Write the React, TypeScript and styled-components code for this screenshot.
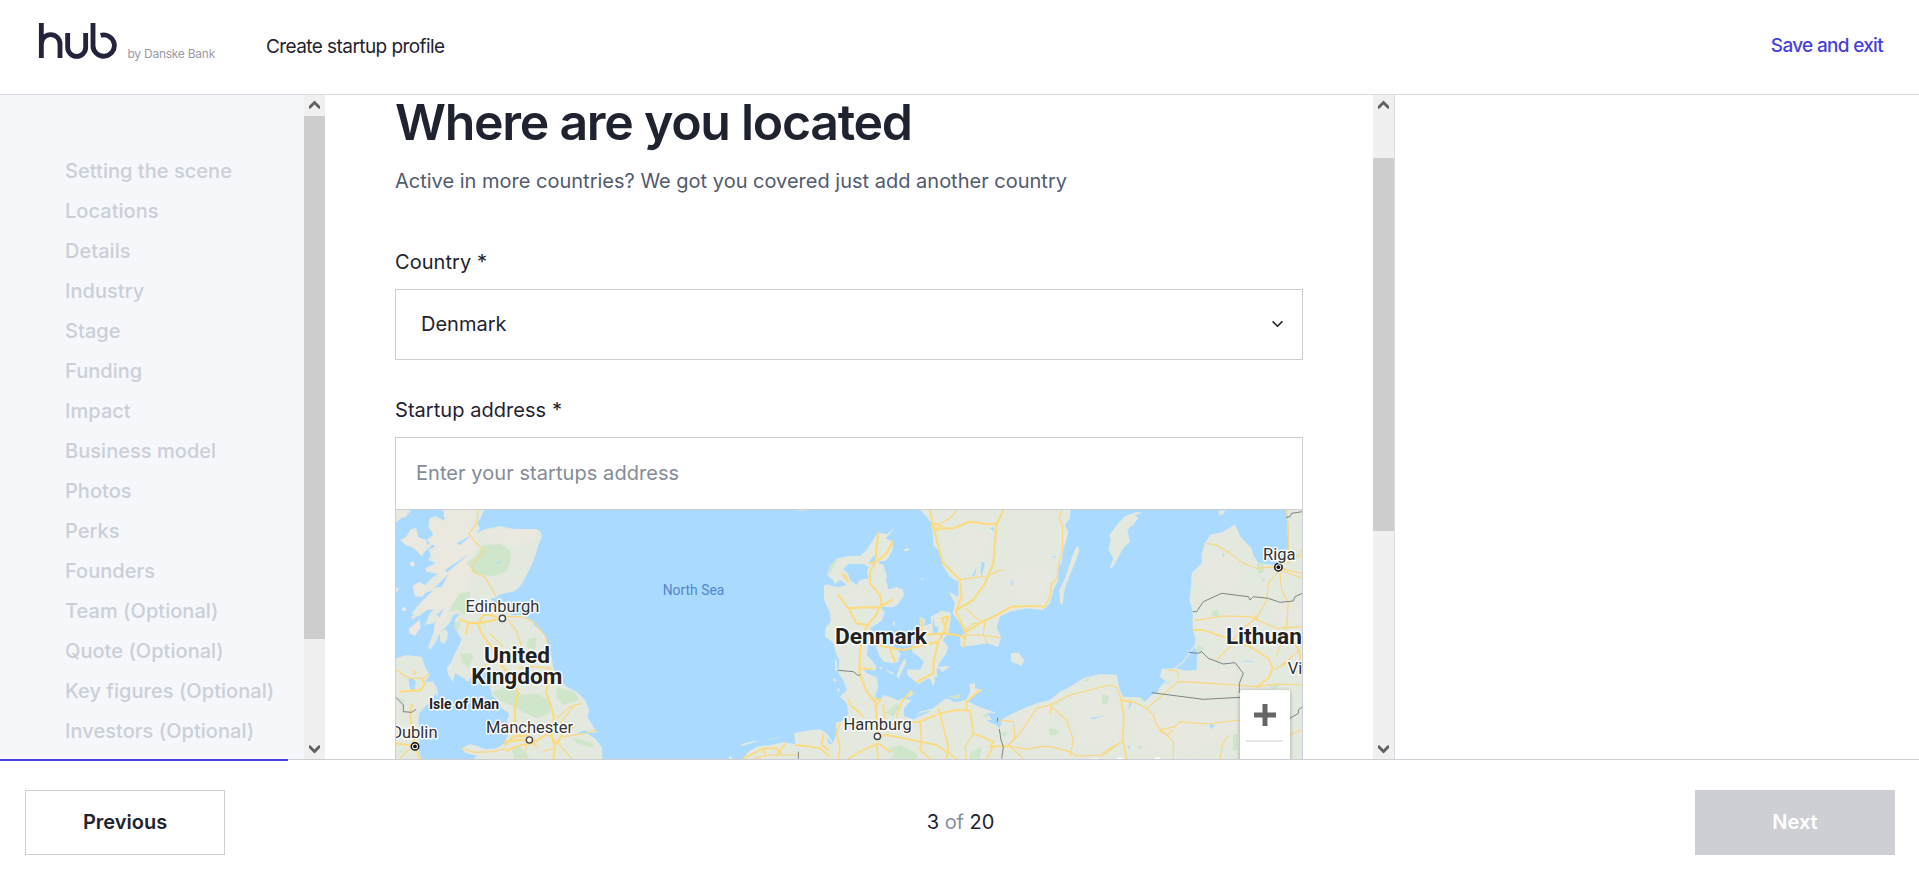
import React from "react";
import styled, { createGlobalStyle } from "styled-components";

const GlobalStyle = createGlobalStyle`
  *, *::before, *::after { box-sizing: border-box; }
  body { margin: 0; background: #fff; color: #1f2330; font-family: Inter, "Liberation Sans", sans-serif; font-size: 20px; overflow: hidden; }
  h1, p, ul { margin: 0; padding: 0; }
  button { font-family: inherit; }
`;

const Page = styled.div`
  display: flex;
  flex-direction: column;
  width: 100%;
  height: 884px;
`;

const Header = styled.header`
  display: flex;
  align-items: flex-start;
  height: 95px;
  flex: none;
  padding: 0 36px 0 38px;
  border-bottom: 1px solid #d9d9e1;
`;

const Brand = styled.div`
  display: flex;
  width: 228px;
  padding-top: 22px;
`;

const Tagline = styled.span`
  margin: 23px 0 0 9.5px;
  font-size: 12px;
  line-height: 18px;
  letter-spacing: -0.25px;
  color: #9a9aa6;
  white-space: nowrap;
`;

const PageTitle = styled.span`
  margin-top: 32px;
  flex: 1;
  font-size: 19px;
  line-height: 30px;
  letter-spacing: -0.57px;
`;

const SaveLink = styled.a`
  margin-top: 31px;
  font-size: 19px;
  line-height: 30px;
  letter-spacing: -0.69px;
  font-weight: 450;
  color: #4840dc;
`;

const Body = styled.div`
  display: flex;
  height: 664px;
  flex: none;
`;

const Sidebar = styled.aside`
  display: flex;
  width: 325px;
  background: #f6f7fb;
`;

const Steps = styled.ul`
  flex: 1;
  padding: 56px 0 0 65px;
  list-style: none;
  overflow: hidden;
`;

const Step = styled.li`
  line-height: 40px;
  font-weight: 500;
  letter-spacing: 0.04px;
  color: #cacfd7;
  white-space: nowrap;
`;

const Main = styled.main`
  display: flex;
  width: 1070px;
  border-right: 1px solid #d9d9e1;
`;

const Form = styled.div`
  flex: 1;
  padding: 1px 70px 0;
  overflow: hidden;
`;

const Heading = styled.h1`
  font-size: 50px;
  line-height: 52px;
  font-weight: 600;
  letter-spacing: -1.28px;
`;

const Intro = styled.p`
  margin-top: 18px;
  line-height: 30px;
  color: #525a70;
`;

const Label = styled.div<{ $top: number }>`
  margin: ${(p) => p.$top}px 0 12px;
  line-height: 30px;
  letter-spacing: 0.05px;
`;

const Select = styled.div`
  display: flex;
  align-items: center;
  justify-content: space-between;
  height: 71px;
  padding: 0 19px 2px 25px;
  border: 1px solid #cdced3;
`;

const AddressInput = styled.div`
  display: flex;
  align-items: center;
  height: 72px;
  padding: 0 20px 1px;
  border: 1px solid #cdced3;
  border-bottom: 0;
  letter-spacing: 0.06px;
  color: #858b98;
`;

const MapFrame = styled.div`
  position: relative;
  height: 250px;
  border: 1px solid #cdced3;
  border-bottom: 0;
  overflow: hidden;
  background: #aadaff;

  > svg { display: block; }
`;

const ZoomControl = styled.div`
  position: absolute;
  top: 180px;
  right: 12px;
  width: 50px;
  height: 100px;
  background: #fff;
  border-radius: 2px;
  box-shadow: 0 1px 4px rgba(0, 0, 0, 0.3);
`;

const ZoomButton = styled.div`
  display: flex;
  align-items: center;
  justify-content: center;
  height: 50px;
`;

const ZoomDivider = styled.div`
  height: 2px;
  margin: 0 7px 0 6px;
  background: #e6e6e6;
`;

const Track = styled.div`
  display: flex;
  flex-direction: column;
  width: 21px;
  height: 664px;
  flex: none;
  background: #f0f0f0;
`;

const ArrowBox = styled.div<{ $down?: boolean }>`
  height: 21px;
  flex: none;
  transform: ${(p) => (p.$down ? "scaleY(-1)" : "none")};
  margin-top: ${(p) => (p.$down ? "auto" : "0")};
  svg { display: block; }
`;

const Thumb = styled.div<{ $offset: number; $length: number }>`
  margin-top: ${(p) => p.$offset}px;
  height: ${(p) => p.$length}px;
  background: #cdcdcd;
`;

const Footer = styled.footer`
  position: relative;
  display: flex;
  align-items: center;
  justify-content: space-between;
  height: 125px;
  padding: 0 24px 0 25px;
  border-top: 1px solid #cdced3;
`;

const Progress = styled.div`
  position: absolute;
  top: -1px;
  left: 0;
  width: 288px;
  height: 2px;
  background: #4840dc;
`;

const NavButton = styled.button<{ $disabled?: boolean }>`
  width: 200px;
  height: 65px;
  padding: 0 0 1px;
  margin-top: 1px;
  border: 1px solid #cecfd4;
  background: ${(p) => (p.$disabled ? "#cecfd4" : "#fff")};
  color: ${(p) => (p.$disabled ? "#fff" : "#1f2330")};
  font-size: 20px;
  font-weight: 600;
`;

const Counter = styled.div`
  padding-left: 1px;
  line-height: 30px;
  letter-spacing: -0.05px;
  span { color: #858da3; }
`;

const MapText = styled.text<{ $size?: number; $bold?: boolean; $water?: boolean }>`
  font-family: Roboto, sans-serif;
  font-size: ${(p) => p.$size ?? 16.5}px;
  font-weight: ${(p) => (p.$bold ? 700 : 400)};
  fill: ${(p) => (p.$water ? "#5286cf" : p.$bold ? "#222" : "#333")};
  stroke: ${(p) => (p.$water ? "none" : "#fff")};
  stroke-opacity: 0.9;
  stroke-width: 3px;
  stroke-linejoin: round;
  paint-order: stroke;
`;

const Land = styled.path`fill: #e3e9df;`;
const Highland = styled.path`fill: #ebe8df;`;
const Forest = styled.path`fill: #cfe6cb;`;
const Water = styled.path`fill: #aadaff;`;
const Motorway = styled.path<{ $width?: number }>`
  fill: none;
  stroke: #fcdb80;
  stroke-width: ${(p) => p.$width ?? 6.5};
  stroke-linejoin: round;
  stroke-linecap: round;
`;
const Road = styled.path`
  fill: none;
  stroke: #fbd67c;
  stroke-width: 3.4;
  stroke-linejoin: round;
`;
const Border = styled.path`
  fill: none;
  stroke: #777b78;
  stroke-width: 2.8;
  stroke-linejoin: round;
`;

const steps = [
  "Setting the scene", "Locations", "Details", "Industry", "Stage", "Funding", "Impact",
  "Business model", "Photos", "Perks", "Founders", "Team (Optional)", "Quote (Optional)",
  "Key figures (Optional)", "Investors (Optional)",
];

const Logo = () => (
  <svg width="80" height="37" viewBox="114 66 240 111" fill="none" stroke="#23233c" strokeWidth="14.5">
    <path d="M124 69V174M124 132A28 28 0 0 1 180 132V174" />
    <path d="M203 99V142A27 27 0 0 0 257 142V99" />
    <path d="M279 69V137A32 32 0 1 0 302 106" />
  </svg>
);

const Scrollbar = ({ offset, length }: { offset: number; length: number }) => (
  <Track>
    <ArrowBox>
      <svg width="21" height="21"><path d="M10.5 5.6L16 11V13.8L14.4 13.4L10.5 9.6L6.6 13.4L5 13.8V11Z" fill="#606060" /></svg>
    </ArrowBox>
    <Thumb $offset={offset} $length={length} />
    <ArrowBox $down>
      <svg width="21" height="21"><path d="M10.5 5.6L16 11V13.8L14.4 13.4L10.5 9.6L6.6 13.4L5 13.8V11Z" fill="#606060" /></svg>
    </ArrowBox>
  </Track>
);

const Town = ({ x, y, capital }: { x: number; y: number; capital?: boolean }) => (
  <g>
    <circle cx={x} cy={y} r={capital ? 3.7 : 3.1} fill="#fff" stroke={capital ? "#111" : "#444"} strokeWidth={capital ? 1.5 : 1.4} />
    {capital && <circle cx={x} cy={y} r="1.9" fill="#111" />}
  </g>
);

const Britain = () => (
  <g transform="translate(-6 -10) scale(.33333)">
    <Land d="M160 28H283L275 48L262 70L270 85L262 98L285 88L320 80L332 78L350 83L375 87H440L452 95L456 112L445 135L437 165L425 195L410 225L400 245L385 265L370 275L345 280L318 288L330 295L355 292L362 300L345 330L365 345L395 345L420 358L435 378L455 395L470 415L475 440L485 470L490 505L505 535L530 560L560 575L585 600L598 630L592 650L610 680L621 698L600 697L585 690L560 700L590 700L615 715L635 740L638 778H250L262 768L225 758L215 745L240 732L270 742L290 748L320 745L345 730L350 710L365 680L350 665L358 640L335 625L320 600L305 585L300 560L310 545L290 515L262 505L250 515L235 545L215 530L195 520L190 547L175 525L170 505L185 485L195 460L215 420L195 385L195 360L210 340L190 345L178 370L150 400L135 430L120 450L115 440L130 400L150 365L165 345L130 370L105 375L120 340L145 310L110 330L85 350L65 340L90 310L130 270L105 280L80 290L70 275L100 260L125 235L142 222L110 215L105 205L138 190L115 180L125 165L115 150L135 140L110 120L130 105L115 80L120 55L135 48L165 62Z" />
    <Highland d="M160 28H255L240 80L265 130L240 185L235 260L190 310L170 350L130 405L135 370L165 325L110 330L75 340L100 305L135 268L150 222L110 205L140 187L120 165L138 140L112 120L132 105L118 75L120 55L165 62ZM285 90L350 86L440 90L435 120L380 140L350 130L300 130Z" />
    <Land d="M18 475L50 465L95 470L105 500L120 525L105 545L130 545L140 562L145 590L135 580L130 600L110 615L88 640L85 665L95 700L85 740L94 778H18Z" />
    <Highland d="M30 120L48 112L62 88L78 84L86 112L108 120L115 142L95 168L72 145L48 135ZM18 28H64L48 50L30 56L18 68ZM58 188L70 184L75 195L65 202ZM68 258L88 245L98 252L118 258L98 290L75 288ZM58 385L88 360L92 380L75 408L58 400ZM18 265H27L18 280ZM75 253L85 250L80 262ZM35 325L45 320L50 330L40 335Z" />
    <Land d="M150 400L162 386L173 395L173 415L162 432L150 422ZM105 140L130 120L125 135L112 150ZM64 350L90 330L82 348L66 360ZM1015 778L1020 766L1028 778Z" />
    <Forest d="M230 185L255 172L280 135L330 132L360 150L362 180L350 213L312 228L280 225L248 215ZM175 335L208 280L240 275L235 310L225 345L205 330ZM305 578L345 560L400 585L440 580L480 605L478 640L440 655L405 640L375 620L335 605ZM500 560L550 575L568 600L520 615L500 595ZM210 462L240 458L252 468L235 505L215 485ZM413 417L440 412L435 450L410 440ZM365 750L390 740L420 776H372ZM545 712L610 730L612 745L560 730ZM195 365L212 362L208 390L192 385ZM20 590L45 600L40 612ZM25 755L40 750L38 760Z" />
    <Water d="M55 538L66 532L78 545L73 572L60 566ZM165 210L240 160L170 218ZM135 262L175 222L155 262ZM140 345L162 325L150 352ZM365 282L300 297L320 312L370 300ZM160 440L183 395L175 445ZM282 62L290 68L268 92L262 98ZM200 130L245 105L210 135ZM310 193L338 180L330 188Z" />
    <Road d="M265 30L260 70L237 100L255 125L285 155L250 190L248 215L285 232L305 265L318 290M350 350L395 350L430 365L465 405L475 440M355 360L380 395L392 430L400 470M385 505L430 500L480 505M500 655L540 620L575 610M520 710L580 702L620 690M215 745L250 757L310 755L350 745M505 730L545 776M280 500L310 480L330 490M340 440L300 400M550 620L510 670M410 730L405 776M460 755L490 745M30 775L60 745M18 508L40 525L60 535L95 535M120 520L95 540M72 510L78 520L70 524Z" />
    <Motorway d="M210 358L235 368L265 370L320 358M265 370L280 345L300 345L318 350M235 368L228 402M262 370L280 410L305 440L330 490L365 530L385 580L375 620V700L395 712M345 725L390 720L440 722L475 700M350 752L385 738L430 728L440 740M490 776L495 740L485 710L492 650L480 610L468 580L475 540L485 520L480 505M475 700L500 730L520 700L550 680M345 735L370 710L415 706M32 575L60 572L90 572L105 550L95 535M65 615L60 650L70 700L75 740L90 776M18 730L50 735L75 740" />
    <Border d="M18 592L40 615V635L65 637L78 628" />
  </g>
);

const CentralEurope = () => (
  <g transform="translate(324 -10) scale(.33333)">
    <Land d="M525 75L510 95L500 103L475 97L462 115L440 150L420 168L385 168L350 176L330 198L322 225L340 242L350 262L320 253L312 257L312 300L330 338L332 365L316 385L316 410L340 430L348 460L358 480L355 520L370 540L380 570L360 590L380 610L385 640L375 660L348 668L350 700L340 728L320 700L300 688L260 692L222 700L226 732L190 727L150 735L110 740L85 755L68 778H1052V560L1020 575L990 600L950 610L900 630L850 655L838 685L800 640L830 638L780 622L745 605L755 590L790 570L765 565L765 550L750 552L750 575L738 600L705 607L680 595L655 612L640 625L600 635L580 658L552 648L552 625L575 600L545 595L535 602L510 590L492 585L478 600L465 590L475 560L470 532L440 520L432 508L465 512L470 500L455 480L440 465L445 435L470 425L465 400L450 385L485 362L495 335L480 320L520 322L535 312L552 285L548 268L530 262L505 268L498 240L500 225L490 195L480 190L500 180L518 150L520 125L497 115L510 102Z" />
    <Land d="M468 440L500 435L522 440L542 460L535 485L518 490L492 485L478 468ZM555 473L558 490L545 515L535 537L530 525L542 495ZM575 440L590 420L603 400L598 352L615 358L612 378L635 370L632 350L665 332L692 338L692 360L685 400L668 420L685 440L678 462L658 490L650 510L652 530L620 538L595 553L562 525L562 508L600 510L612 485L590 465L578 458ZM635 515L645 540L640 560L628 530ZM652 500L690 498L668 517ZM560 583L575 570L580 582L568 592ZM517 368L525 362L524 380ZM548 152L560 143L570 150L558 154ZM873 460L895 458L913 480L905 498L873 484ZM603 235L610 234L607 241ZM62 733L100 724L120 722L100 728L66 738ZM125 722L200 708L160 717ZM345 480L350 478L352 512L345 510ZM340 535L352 541L340 545ZM350 570L360 565L356 578ZM492 508L525 520L515 523ZM475 502L488 500L484 508ZM215 28L270 30L240 33Z" />
    <Land d="M600 28L610 40L620 50L635 70L638 100L640 135L655 150L670 200L690 230L715 245L715 290L686 275L705 310L698 340L720 370L735 400L720 410L722 440L770 435L800 430L835 440L843 412L830 380L840 350L870 335L920 325L970 330L990 310L1000 270L1015 240L1015 200L1025 190L1030 150L1045 100L1035 75L1050 55L1052 28Z" />
    <Water d="M370 208L385 192L432 192L446 202L440 215L446 235L420 240L410 255L390 240L385 222ZM345 252L360 240L380 255L370 258L352 262ZM445 190L460 168L470 170L462 195ZM500 195L475 190L480 183L502 186ZM314 335L325 335L328 360L318 355ZM640 350L645 380L655 378L652 400L638 398ZM785 185L795 188L785 230L782 215ZM872 235L885 245L875 262L870 250ZM820 112L830 100L825 118ZM810 85L820 80L822 95ZM320 712L340 735L325 730ZM700 110L715 95L708 105ZM755 230L770 200L765 225ZM575 660L640 630L600 640ZM800 660L835 660L832 675L815 670Z" />
    <Highland opacity=".5" d="M700 100L760 80L810 110L790 170L730 190ZM850 230L960 190L990 230L960 310L880 300ZM360 290L420 260L450 300L410 310ZM900 640L1050 590V740L950 730L900 700ZM560 680L640 690L640 720L570 715Z" />
    <Forest d="M325 215L335 190L355 177L345 195L330 222ZM500 745L540 735L590 760L595 776H510L525 760ZM680 590L725 583L715 597L685 592ZM750 760L785 740L780 776H750ZM985 685L1015 690L1010 708L988 700ZM785 645L805 640L800 655ZM840 700L865 692L855 710ZM495 640L530 610L540 620L520 650Z" />
    <Road d="M720 238L800 228L850 208M738 325L770 355L795 365L790 400L800 430M740 405L780 405L840 413M840 660L880 665L885 710L865 738L920 748L960 740L1000 740L1050 755M865 735L900 700L950 625L1000 612L1050 585M1000 612L1040 660L1052 700M870 738L910 776M760 700L735 740L740 776M655 75L690 55L710 32M735 390L760 370L780 370M1025 30L1017 55L1028 75L1028 150L1015 200L1012 235M230 765L150 765L100 776" />
    <Motorway d="M475 100L468 150V185L450 215V250L480 285L485 310L465 350L440 380L425 410L420 460L418 520L440 575L465 605L470 650L475 700M518 125L500 160L470 185L450 190M355 285L385 325L430 322L478 322L515 300M385 325L410 370L440 375M470 435L520 445L550 450L590 440L655 425L670 400L630 403L605 400V360M510 445L525 485M670 400L685 350L665 355L680 390M655 425L640 490V520L592 545M675 400L710 405L735 412M420 505L455 507M630 30L640 80L650 120L670 190L720 240L725 290L708 335L725 370L738 400L730 440M640 85L700 85L750 65L800 72H830L850 30M830 72L825 130L820 190L795 250L760 300L710 330M738 395L780 370L830 345L875 320L925 318" />
    <Motorway $width={5.4} d="M925 318L975 320L990 290L995 250L1012 235M475 710L500 705L600 725L650 735L710 776M480 690L520 672L600 665L660 640L710 630L750 632L760 700L820 725L810 740L870 738M600 665L605 710L600 750L630 776M655 625L670 680L685 740L680 776M475 730L430 750L385 776M360 670L350 700L360 740L355 776M470 735L475 776M475 730L510 755M530 650L545 605L575 575M385 600L395 620L410 630L430 650M490 615L495 655M228 735L270 740L300 745L330 770M310 705L305 735L325 750M70 776L130 745L170 745L180 760M195 732L170 765M130 745L135 765M740 630V605L780 570M820 740L800 776M455 598H483L470 615M665 80L645 70L635 82L655 92M380 240L365 220M375 225L385 245" />
    <Border d="M355 511L400 515L415 527L422 523M833 653L832 665M838 687L843 720L850 740L845 776M235 755V776" />
  </g>
);

const Baltics = () => (
  <g transform="translate(654 -10) scale(.33333)">
    <Land d="M708 28L712 80L715 140L700 180L670 195L625 188L610 165L605 145L590 130L570 108L555 73L520 95L480 105L465 130L455 160V190L425 220L423 260L418 300L428 335V390L437 420L432 440L442 455L440 510L405 512L380 505L335 506L330 530L345 542L368 545L335 555L325 575L305 585L285 605L270 592L220 590L210 570L200 525L150 522L100 535L60 560L20 590L0 605V778H760V28Z" />
    <Land d="M82 136L88 150L75 190L60 225L45 265L38 312L30 310L28 270L45 235L60 190L70 160ZM278 38L255 45L265 55L250 75L232 88L240 125L220 145L205 172L190 200L178 207L190 175L175 150L182 120L178 105L205 70L225 48L260 36ZM505 33L525 30L520 42L508 46Z" />
    <Highland opacity=".5" d="M470 140L550 160L580 220L560 270L470 270L440 240ZM60 600L180 570L210 620L200 720L80 740ZM250 650L550 620L560 700L420 760L260 740ZM440 350L600 320L650 380L560 420L450 385ZM400 515L560 500L560 580L420 570ZM650 310L750 310V390L680 370Z" />
    <Forest d="M620 190L640 188L642 215L625 222ZM485 335L500 328L510 350L485 348ZM158 580L178 590L172 615L155 608ZM440 435L462 440L455 460L440 455ZM95 540L120 535L115 545ZM660 555L685 548L685 565L665 568ZM550 700L565 705L562 750L548 752ZM0 685L28 690L20 705H0ZM260 740L275 735L275 750ZM630 230L645 235L640 248Z" />
    <Water d="M515 160L522 163L520 173ZM478 673L495 675L483 688ZM240 600L245 612L235 632ZM580 482H610V485H580ZM120 655L165 645L130 658ZM5 170L18 168L14 175ZM230 740L240 735L240 748Z" />
    <path d="M432 440L400 485L370 508M325 570L345 548L368 545" fill="none" stroke="#dfe9dc" strokeWidth="4" />
    <Road d="M0 617L60 585L120 570L180 555L200 562L215 600L250 605L290 625L385 545L450 548L555 555L620 560L680 552L757 555M290 625L310 645L320 675L340 695L370 725V776M330 690L375 680L390 665L470 672L570 660M370 690L350 705L325 690M350 510L382 512L385 532M470 130L500 135L540 160L580 190L620 205L685 200L757 165M685 215L655 250L650 300L620 355L570 390L540 440L500 480M690 220L695 270L715 310L710 380L680 470M432 362L520 348L600 350L680 385L757 380M710 30L715 80V150L700 185M690 210L757 235M695 205L730 215L757 220M0 740L60 755L80 768L150 765L215 725M0 617L50 660L70 720L60 770M535 705L518 730L510 776M668 510L710 490L757 530M720 705L757 688M222 720L155 770M715 190L757 150M630 365L610 345M750 450L690 500" />
    <Motorway $width={5.4} d="M213 598L222 650L218 720L230 776M432 390L460 390L525 412L600 440L655 475L668 505L655 535L620 560M735 430L750 460V480M215 600L245 607M5 610L0 640" />
    <Border d="M428 335H440L460 305L515 280L595 290L600 300L610 290L655 295L690 307L730 303L735 290L757 280M417 457L445 460L455 455L475 475L520 492L555 488L580 520L568 550V578M305 578L460 598L570 592M708 52L720 50L725 40L757 35M720 655L745 640L745 630L757 620" />
  </g>
);

const EuropeMap = () => (
  <svg width="906" height="249" viewBox="0 0 906 249">
    <Britain />
    <CentralEurope />
    <Baltics />
    <Town x={106.4} y={108.4} />
    <Town x={133.4} y={230} />
    <Town x={19} y={236.4} capital />
    <Town x={481.4} y={226.4} />
    <Town x={882.4} y={57.2} capital />
    <g textAnchor="middle">
      <MapText x="106.4" y="101.6">Edinburgh</MapText>
      <MapText x="121" y="152.8" $size={22.6} $bold>United</MapText>
      <MapText x="120.8" y="174.2" $size={22.6} $bold>Kingdom</MapText>
      <MapText x="68" y="199" $size={14} $bold>Isle of Man</MapText>
      <MapText x="133.5" y="223.4">Manchester</MapText>
      <MapText x="297.5" y="85" $size={13.9} $water>North Sea</MapText>
      <MapText x="485" y="133.8" $size={22.7} $bold>Denmark</MapText>
      <MapText x="481.6" y="219.5">Hamburg</MapText>
      <MapText x="883.2" y="49.5">Riga</MapText>
      <MapText x="729" y="265.8" $size={22.6} $bold>Poland</MapText>
    </g>
    <MapText x="41.5" y="228.2" textAnchor="end">Dublin</MapText>
    <MapText x="829.9" y="133.8" $size={22.6} $bold>Lithuan</MapText>
    <MapText x="891.8" y="163.5">Vi</MapText>
  </svg>
);

export default function App() {
  return (
    <Page>
      <GlobalStyle />
      <Header>
        <Brand>
          <Logo />
          <Tagline>by Danske Bank</Tagline>
        </Brand>
        <PageTitle>Create startup profile</PageTitle>
        <SaveLink>Save and exit</SaveLink>
      </Header>
      <Body>
        <Sidebar>
          <Steps>
            {steps.map((s) => (
              <Step key={s}>{s}</Step>
            ))}
          </Steps>
          <Scrollbar offset={0} length={523} />
        </Sidebar>
        <Main>
          <Form>
            <Heading>Where are you located</Heading>
            <Intro>Active in more countries? We got you covered just add another country</Intro>
            <Label $top={51}>Country *</Label>
            <Select>
              Denmark
              <svg width="11" height="8" fill="none" stroke="#222" strokeWidth="1.6"><path d="M.6 1.4L5.5 6.2L10.4 1.4" /></svg>
            </Select>
            <Label $top={35}>Startup address *</Label>
            <AddressInput>Enter your startups address</AddressInput>
            <MapFrame>
              <EuropeMap />
              <ZoomControl>
                <ZoomButton>
                  <svg width="22" height="22"><path d="M11 0V22M0 11H22" stroke="#666" strokeWidth="5" /></svg>
                </ZoomButton>
                <ZoomDivider />
              </ZoomControl>
            </MapFrame>
          </Form>
          <Scrollbar offset={42} length={373} />
        </Main>
      </Body>
      <Footer>
        <Progress />
        <NavButton>Previous</NavButton>
        <Counter>3 <span>of</span> 20</Counter>
        <NavButton $disabled>Next</NavButton>
      </Footer>
    </Page>
  );
}
